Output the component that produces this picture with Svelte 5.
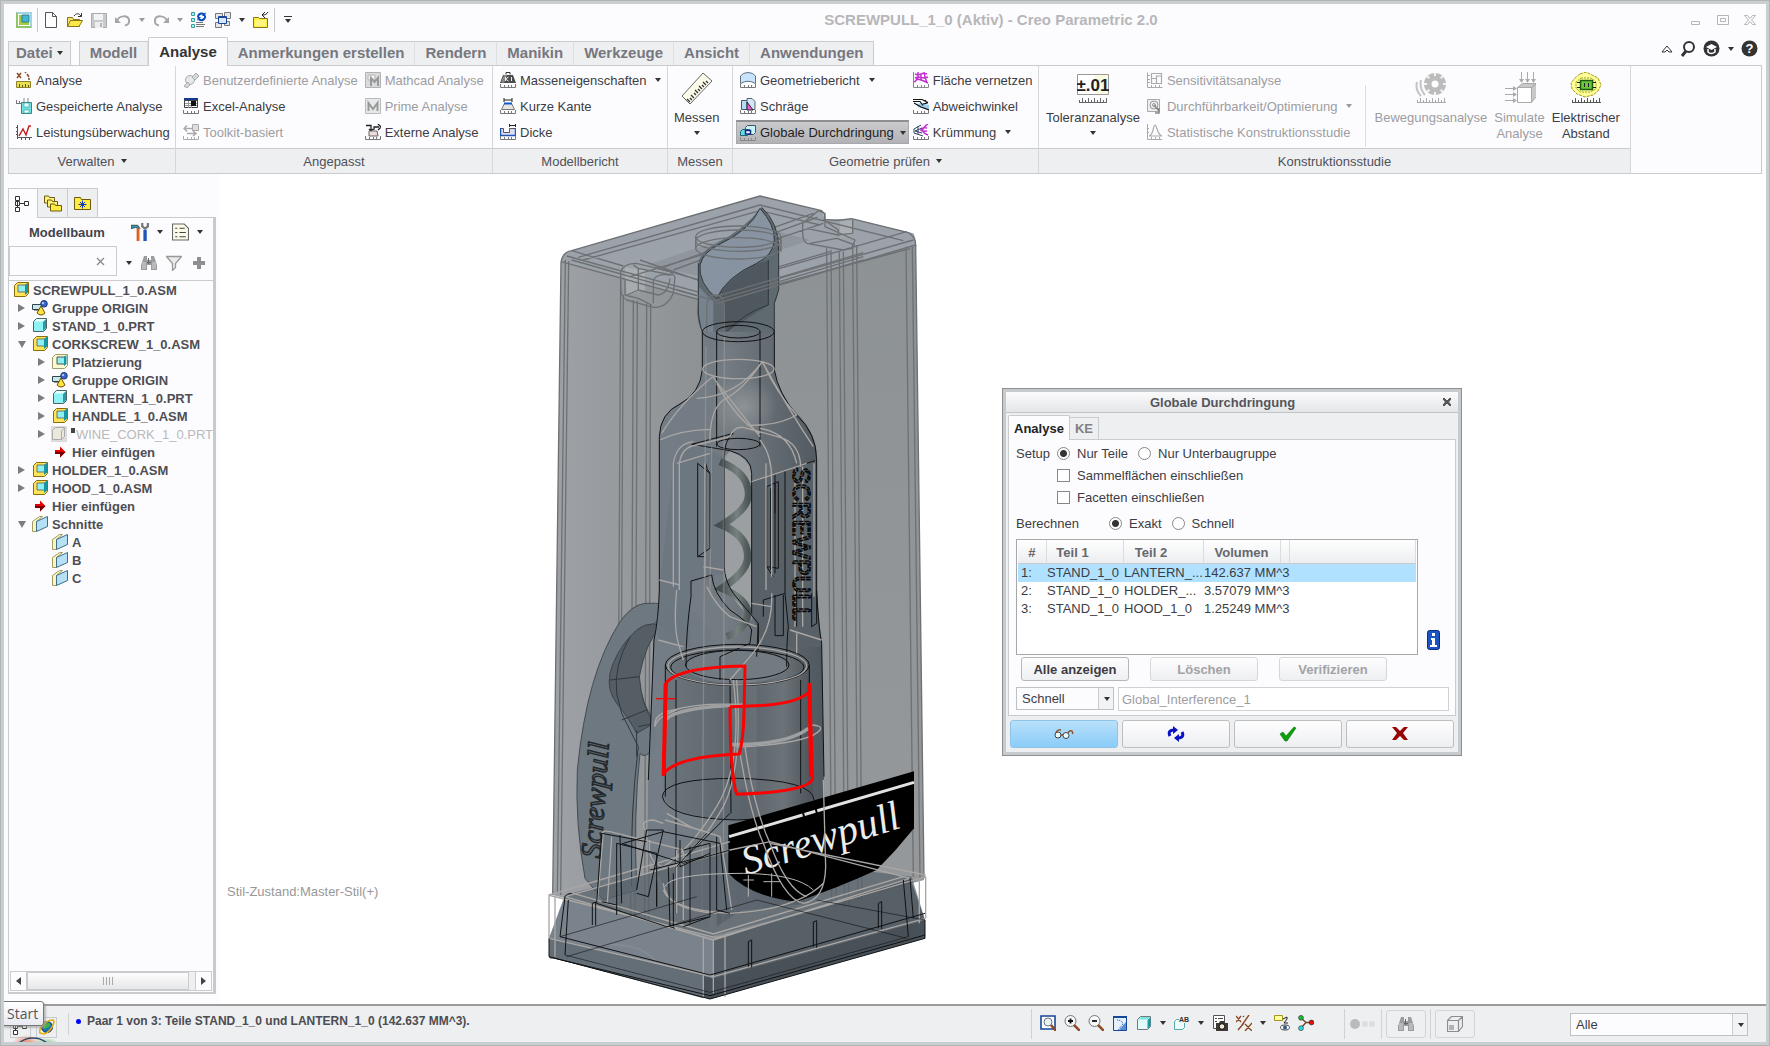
<script lang="ts">
    const icons: Record<string, string> = {
        app: `<path d="M0 0h16v16H0z" fill="#9fd3e6"/><path d="M0 16V0l16 16z" fill="#8fc46a"/><path d="M2 2h12v12H2z" fill="#fff"/><path d="M3 3h4v7h6v3H3z" fill="#a5cc3c"/><path d="M6 3h7v7H6z" fill="#43b5d6" stroke="#2a7f8c"/>`,
        file: `<path d="M2.5.5h7l4 4v11h-11z" fill="#fff" stroke="#555"/><path d="M9.5.5v4h4" fill="none" stroke="#555"/>`,
        open: `<path d="M.5 14.5v-9h5l1 2h6v7z" fill="#f5e070" stroke="#8a7420"/><path d="M.5 14.5l3-6h12l-3.500 6z" fill="#ffe84a" stroke="#8a7420"/><path d="M7 4c2-3 5-3 7 0M14.500 1v3.500H11" fill="none" stroke="#333"/>`,
        save: `<path d="M.5 1.500h15v14H.5z" fill="#c8cacc" stroke="#a8aaac"/><path d="M3 2h9v6H3z" fill="#f2f3f4"/><path d="M4 10h8v6H4z" fill="#efefef"/><path d="M9 11h2v4H9z" fill="#b5b5b5"/>`,
        undo: `<path d="M2 9C4 3 13 3 14 8c.5 3-1.500 5-4 5.500" fill="none" stroke="#a3a6a9" stroke-width="2"/><path d="M0 5v6h6z" fill="#a3a6a9"/>`,
        redo: `<path d="M14 9C12 3 3 3 2 8c-.5 3 1.500 5 4 5.500" fill="none" stroke="#a3a6a9" stroke-width="2"/><path d="M16 5v6h-6z" fill="#a3a6a9"/>`,
        regen: `<path d="M.5.5h3v3h-3zM.5 6.500h3v3h-3zM.5 12.500h3v3h-3z" fill="#a9f0f0" stroke="#3a9c9c"/><path d="M5 10.500h7M5 12.500h9M5 14.500h8" stroke="#777"/><path d="M7 5a3.500 3.500 0 0 1 6-2.500M14 4a3.500 3.500 0 0 1-6 3" fill="none" stroke="#0748c0" stroke-width="2"/><path d="M14.500 0v4H11zM6.500 9V5H10z" fill="#0748c0"/>`,
        windows: `<path d="M.5 1.500h7v5h-7zM9.500.5h6v6h-6zM.5 10.500h6v5h-6zM9.500 9.500h5v4h-5z" fill="#e4e6e8" stroke="#777"/><path d="M3.500 4.500h8v7h-8z" fill="#d7e6fb" stroke="#1a4799"/><path d="M3.500 5.500h8" stroke="#1a4799"/>`,
        closefolder: `<path d="M.5 15.500v-10h5l1 1h8v9z" fill="#ffef3c" stroke="#8a7420"/><path d="M2 8h11v6H2z" fill="#fff580"/><path d="M15 0c-1 2-3 3-5 3M12 0L9 3l3 3" fill="none" stroke="#222"/>`,
        analyse: `<path d="M1 1l4 5M5 1L1 6M9 0l1 1M11 2l2 3M13 6v2" stroke="#8a4a1e" stroke-width="1.500"/><path d="M.5 9.500h14v6H.5z" fill="#e8df50" stroke="#8d8325"/><path d="M3.500 12v3M6.500 13v2M9.500 12v3M12.500 13v2" stroke="#5e5716"/>`,
        saved: `<path d="M.5 2v4M.5 5.500h5M3.500 3v3" stroke="#777" fill="none"/><path d="M5.500 4.500h10v11h-10z" fill="#6de0e0" stroke="#318a8a"/><path d="M8 0v4M12 0v4" stroke="#888"/><path d="M8 5h5v4H8zM8 12h5v3H8z" fill="#dff" stroke="#318a8a" stroke-width=".5"/>`,
        chart: `<path d="M1.500 1v14M1 13.500h15M0 3.500h2M0 7.500h2M0 10.500h2M5.500 13v3M9.500 13v3M13.500 13v3" stroke="#555" fill="none"/><path d="M3 12l4-7 3 6 3-9 2 0" fill="none" stroke="#c51a1a" stroke-width="1.400"/>`,
        userdef: `<circle cx="7" cy="8" r="4.500" fill="#e6e7e8" stroke="#aaa"/><path d="M9 5l4-4 3 3-4 4zM1 14l4-4 2 3-3 3z" fill="#d6d7d8" stroke="#aaa"/>`,
        excel: `<path d="M1 0h14v3H1z" fill="#15398f"/><path d="M1.500 2.500h13v7h-13z" fill="#fff" stroke="#444"/><path d="M2 5.500h12M2 7.500h12M5.500 3v7M8.500 3v7" stroke="#999"/><path d="M8 3h5v5H8z" fill="#111"/><path d="M.5 12v3.500h15V12M4.500 13v2M8.500 13v2M11.500 13v2" fill="none" stroke="#777"/>`,
        toolkit: `<path d="M9.500.5h6v6h-6z" fill="#ddd" stroke="#aaa"/><path d="M1 4.500h9M4 1.500l-3 3 3 3M13 9.500H4M10 7l3 2.500-3 2.500" fill="none" stroke="#aaa" stroke-width="1.500"/><path d="M.5 12v3.500h15V12M4.500 13v2M8.500 13v2M11.500 13v2" fill="none" stroke="#aaa"/>`,
        mathcad: `<path d="M.5.5h15v15H.5z" fill="#d9dbdc" stroke="#b0b2b3"/><path d="M3 3h7v5H3z" fill="#f2f2f2" stroke="#b5b5b5"/><path d="M6 14V6l3.500 4L13 6v8" fill="none" stroke="#999" stroke-width="2"/>`,
        prime: `<path d="M.5.5h15v15H.5z" fill="#e6e8e9" stroke="#b8babb"/><path d="M3.500 13V5l4.500 6 4.500-6v8" fill="none" stroke="#999" stroke-width="2"/>`,
        external: `<path d="M1 1.500h5v5M6 7l-2-2M6 7l2-2M9 6V3h5M13 0l3 3-3 3" fill="none" stroke="#222" stroke-width="1.300"/><path d="M4 7h8l1 5H4z" fill="#efdcdc" stroke="#666"/><path d="M.5 12v3.500h15V12M4.500 13v2M8.500 13v2M11.500 13v2" fill="none" stroke="#777"/>`,
        mass: `<path d="M6 2.500V.5h4v2" fill="none" stroke="#333"/><path d="M3 3h10l3 8H0z" fill="#4c4c4c"/><path d="M1 10l3-7h3L4 11z" fill="#888"/><path d="M5.500 5v4M8.500 5l-3 2 3 2M11.500 5v4" stroke="#eee" fill="none"/><path d="M.5 12v3.500h15V12M4.500 13v2M8.500 13v2M11.500 13v2" fill="none" stroke="#777"/>`,
        edge: `<path d="M4 0v4M12 0v4M4 2h8" stroke="#222" fill="none"/><path d="M4.500 5.500h7l3 6h-13z" fill="#e5e5e5" stroke="#777"/><path d="M4 5.500h8" stroke="#0b58c9" stroke-width="2"/><path d="M.5 12v3.500h15V12M4.500 13v2M8.500 13v2M11.500 13v2" fill="none" stroke="#777"/>`,
        thick: `<path d="M.5 4.500h3v4h6v-4h6v7H.5z" fill="#dcdcf5" stroke="#555"/><path d="M.5 4v7.500h15V4" fill="none" stroke="#2257b5" stroke-width="1.500"/><path d="M9.500 0v3M15.500 0v3M9.500 1.500h6" stroke="#222"/><path d="M.5 12v3.500h15V12M4.500 13v2M8.500 13v2M11.500 13v2" fill="none" stroke="#777"/>`,
        georeport: `<path d="M.5 11.500V4Q3 .5 8 .5T15.500 4v7.500Q8 7 .5 11.500z" fill="#c9e4fb" stroke="#5b7285"/><path d="M.5 12v3.500h15V12M4.500 13v2M8.500 13v2M11.500 13v2" fill="none" stroke="#777"/>`,
        draft: `<path d="M1.500 2.500h6v9h-6z" fill="#b5dcf7" stroke="#456"/><path d="M7 .5h5l3 3v8H7z" fill="#d3e6f5" stroke="#567"/><path d="M7 12V4l6 8z" fill="#ee5fe0" stroke="#222"/><path d="M.5 12v3.500h15V12M4.500 13v2M8.500 13v2M11.500 13v2" fill="none" stroke="#777"/>`,
        interfere: `<path d="M5.500 2.500l2-2h8v7l-2 2h-8z" fill="#c6f5f8" stroke="#456"/><path d="M.5 6.500l2-2h7v4l-2 2H.5z" fill="#5be0e8" stroke="#267"/><path d="M5.500 5.500h5v3.500h-5z" fill="#fff" stroke="#11297e" stroke-width="1.500"/><path d="M.5 12v3.500h15V12M4.500 13v2M8.500 13v2M11.500 13v2" fill="none" stroke="#888"/>`,
        mesh: `<path d="M2 2l3 1 6-2 3 1M2 6l3-1 6 1 4-1M1 10l4-3 6 2 4 2M5 0v5l-3 5M11 0l1 5 2 6M8 2v7" fill="none" stroke="#c42bd4" stroke-width="1.400"/><path d="M.5 0v15.500h15V12M4.500 13v2M8.500 13v2M11.500 13v2" fill="none" stroke="#888"/>`,
        deviation: `<path d="M4 6l4-1 8 2v5L5 9z" fill="#9ccfee"/><path d="M0 1.500h9l6 3M0 3.500h7l3 4M1 5l7 4 8 3M12 2l2 3-4 1" fill="none" stroke="#111" stroke-width="1.200"/><path d="M.5 12v3.500h15V12M4.500 13v2M8.500 13v2M11.500 13v2" fill="none" stroke="#777"/>`,
        curvature: `<path d="M15 0C9 4 7 8 15 11M14 4C8 3 4 8 14 7" fill="none" stroke="#c42bd4" stroke-width="1.500"/><path d="M8 1L1 5v4l9 3M9 4L2 7l7 2M5 2v8" fill="none" stroke="#346" stroke-width="1"/><path d="M.5 12v3.500h15V12M4.500 13v2M8.500 13v2M11.500 13v2" fill="none" stroke="#777"/>`,
        sens: `<path d="M.5.500v15h15M1 3.500h2M1 7.500h2M1 10.500h2M4.500 13v2M8.500 13v2M12.500 13v2" fill="none" stroke="#aaa"/><path d="M4.500 1.500h10v10h-10zM4.500 6.500h5v5M9.500 6.500V4h5" fill="none" stroke="#aaa" stroke-width="1.200"/>`,
        optimize: `<path d="M.5 1.500h12v12H.5z" fill="#eee" stroke="#aaa"/><circle cx="7" cy="7" r="4" fill="none" stroke="#999"/><circle cx="7" cy="7" r="1.500" fill="none" stroke="#999"/><path d="M7 7l5 6M12 10v5h-4" fill="none" stroke="#888" stroke-width="1.600"/>`,
        stat: `<path d="M.5 0v15.500H15M4.500 13v2M8.500 13v2M12.500 13v2M0 4.500h2M0 8.500h2" fill="none" stroke="#aaa"/><path d="M2 12C7 11 6 1 8 1s2 10 7 11z" fill="none" stroke="#aaa" stroke-width="1.200"/>`,
        tree: `<path d="M.5.5h4v4h-4zM.5 5.500h4v4h-4zM.5 11.500h4v4h-4zM9.500 5.500h4v4h-4z" fill="#fff" stroke="#333"/><path d="M5 7.500h4M2.500 4v8" stroke="#333"/>`,
        folders: `<path d="M.5 7.500v-7h4l1 1.500h5v5.500z" fill="#fdf27a" stroke="#6d5a10"/><path d="M3.500 11.500v-7h4l1 1.500h5v5.500z" fill="#fdf27a" stroke="#6d5a10"/><path d="M6.500 15.500v-7h4l1 1.500h6v5.500z" fill="#ffec3c" stroke="#6d5a10"/>`,
        favorites: `<path d="M.5 14.500v-12h6l1 2h9v10z" fill="#ffee3c" stroke="#6d5a10"/><path d="M8.500 5.500v8M4.500 9.500h8M6 7l5 5M11 7l-5 5" stroke="#1738c8"/>`,
        tools: `<path d="M0 2h6l2 3H7L4 4 0 5z" fill="#2a9bb0" stroke="#444" stroke-width=".8"/><path d="M5 5h3v11H5z" fill="#e05a20"/><path d="M7 5h1v11H7z" fill="#f3c020"/><path d="M10 0v3l2.500 2L15 3V0" fill="none" stroke="#777" stroke-width="2"/><path d="M11 6h3v10h-3z" fill="#1f57b8"/>`,
        list: `<path d="M.5.5h11l4 4v11H.5z" fill="#fbfbe8" stroke="#666"/><path d="M3 4.500h2M3 8.500h2M3 12.500h2M7 4.500h5M7 8.500h6M7 12.500h6" stroke="#444"/>`,
        binoc: `<path d="M3 1h3v4h4V1h3l3 9v5h-6v-5H6v5H0v-5z" fill="#9a9c9e"/><path d="M2 7v7M4 7v7M12 7v7M14 7v7" stroke="#d5d6d7"/><path d="M7.500 3v6M6 7.500h4" stroke="#666"/>`,
        funnel: `<path d="M.5 1.500h15l-6 7v4l-3 3v-7z" fill="#ebebeb" stroke="#999" stroke-width="1.300"/>`,
        plus: `<path d="M6 2h4v4h4v4h-4v4H6v-4H2V6h4z" fill="#8d8f91"/>`,
        asm: `<path d="M1.500 3.500l3-3h11v11l-3 3h-11z" fill="#ffe45a" stroke="#8d6c10"/><path d="M5 3h9v7H5z" fill="#8ff0f4" stroke="#555" stroke-width=".8"/><path d="M12 3l3-2.500v10L12 13z" fill="#1795a5"/>`,
        part: `<path d="M1.500 3.500l3-3h10v10l-3 3h-10z" fill="#8df3f6" stroke="#4c6468"/><path d="M11 4l3-3v9l-3 3z" fill="#2b9aa2"/><path d="M2 3.500l3-2.500h9l-3 2.500z" fill="#e9ffff"/>`,
        partoff: `<path d="M0 0h16v16H0z" fill="#dcdcdc"/><path d="M1.500 4.500l3-3h9v9l-3 3h-9z" fill="#ebe9dc" stroke="#aaa"/><path d="M10.500 14V5l3-3" fill="none" stroke="#aaa"/>`,
        place: `<path d="M.5 3.500l3-3h12v11l-3 3H.5z" fill="#fcf8cf" stroke="#a09a70"/><path d="M5 3h8v7H5z" fill="#8ff0f4" stroke="#555"/><path d="M12 3l2.500-2v9L12 12z" fill="#1795a5"/>`,
        group: `<path d="M.5 4.500h9v5h-9z" fill="#c8e8e8" stroke="#345"/><path d="M2 10h5" stroke="#333"/><circle cx="12" cy="3.800" r="3.300" fill="#3a67c8" stroke="#1b3570"/><path d="M9 6l4 7q-4 4-8 0z" fill="#ffe23c" stroke="#6b5210"/><circle cx="11" cy="3" r="1" fill="#cfe0ff"/>`,
        arrow: `<path d="M3 6h5V2.500l5.500 5.500L8 13.500V10H3z" fill="#e80000"/><path d="M3 8h10.500L8 13.500V10H3z" fill="#7a0000"/>`,
        plane: `<path d="M.5 5.500l7-5h3l-6 5v10h-4z" fill="#fbf5c0" stroke="#a29b62"/><path d="M4.500 5.500l11-5v10l-11 5z" fill="#b5e0f5" stroke="#3d6d88"/>`,
        zoomfit: `<path d="M1 1h14v13H1z" fill="#fff" stroke="#15479a" stroke-width="1.600"/><circle cx="8" cy="7" r="4" fill="#e8f2f8" stroke="#777"/><path d="M11 10l5 6" stroke="#8a4a24" stroke-width="2.500"/>`,
        zoomin: `<circle cx="6.500" cy="6" r="5.500" fill="#f5f7f8" stroke="#777"/><path d="M4 6h5M6.500 3.500v5" stroke="#111" stroke-width="1.800"/><path d="M10 10l6 6" stroke="#8a4a24" stroke-width="2.500"/>`,
        zoomout: `<circle cx="6.500" cy="6" r="5.500" fill="#f5f7f8" stroke="#777"/><path d="M4 6h5" stroke="#111" stroke-width="1.800"/><path d="M10 10l6 6" stroke="#8a4a24" stroke-width="2.500"/>`,
        repaint: `<path d="M1.500 1.500h13v14h-13z" fill="#e4f0fc" stroke="#15479a"/><path d="M1 1h14v2H1z" fill="#15479a"/><path d="M14 7L7 15h7z" fill="#5a8ed0"/><path d="M5 5q5 0 6 4l-5 6" fill="none" stroke="#15479a" stroke-dasharray="1 1"/>`,
        shade: `<path d="M1.500 4.500l3-3h10v10l-3 3h-10z" fill="#e4fbfb" stroke="#777"/><path d="M11.500 5l3-3v9l-3 3z" fill="#1f9aa3"/><path d="M2 4.500L5 2h9l-3 2.500z" fill="#79e4e6"/>`,
        camera: `<path d="M1.500.5h11v13h-11z" fill="#fff" stroke="#555"/><path d="M3 3.500h2M6 3.500h5M3 6.500h2" stroke="#444"/><path d="M4 8h3l1-2h4l1 2h3v8H4z" fill="#3c3a35"/><circle cx="10" cy="11.500" r="2.800" fill="#f2ecd2" stroke="#111"/>`,
        axes: `<path d="M0 1l5 6M5 1L0 7M7 1l1 1M6 10L13 0M2 15l6-7M9 9l7 7M16 8l-7 8" fill="none" stroke="#8a4a24" stroke-width="1.400"/>`,
        annot: `<path d="M.5.500h8v5h-8z" fill="#ffff9c" stroke="#a0981c"/><path d="M9 4l4-2v2l-3 4h4" fill="none" stroke="#222"/><ellipse cx="11" cy="12.500" rx="4.500" ry="2.500" fill="#fff" stroke="#444"/><circle cx="11" cy="12.500" r="2" fill="#2c5c8c"/>`,
        csys: `<path d="M3 3l5 4.500L3 13M8 7.500h6" fill="none" stroke="#7b3b18" stroke-width="1.300"/><circle cx="3" cy="2.800" r="2.400" fill="#18c032" stroke="#222" stroke-width=".6"/><circle cx="13.500" cy="7.500" r="2.400" fill="#e01010" stroke="#222" stroke-width=".6"/><circle cx="3" cy="13.200" r="2.400" fill="#28dce8" stroke="#222" stroke-width=".6"/>`,
        box: `<path d="M.5 4.500h11v11H.5zM.5 4.500l4-4h11v10l-4 5M11.500 4.500l4-4" fill="none" stroke="#8b8d8f" stroke-width="1.200"/><path d="M2 9h5v5H2z" fill="#b0b2b4"/>`,
        globe: `<circle cx="8" cy="8" r="5.500" fill="#1f6fc0" stroke="#123"/><path d="M4 7q3-4 7-3q1 4-3 5t-3 3z" fill="#39b34a"/><path d="M1 14C-1 9 7 1 14 1c3 1-2 12-9 14z" fill="none" stroke="#e6b010" stroke-width="1.600"/>`,
        info: `<rect x=".5" y=".5" width="12" height="19" rx="2" fill="#1c54c4" stroke="#0d2e80"/><path d="M5 3h3v3H5zM4 8h4v7h2v2H3v-2h2v-5H4z" fill="#fff"/>`,
        glasses: `<circle cx="4" cy="9" r="3" fill="#e8fbff" stroke="#444"/><circle cx="12" cy="9.500" r="3" fill="#e8fbff" stroke="#444"/><path d="M7 9h2M2 7Q3 3 7 4M14 7q1-3 4-2l1 3" fill="none" stroke="#8a4a24" stroke-width="1.300"/>`,
        repeat: `<path d="M3 10C1 6 3 4 7 4M15 6c2 4 0 6-4 6" fill="none" stroke="#0a12c8" stroke-width="3"/><path d="M6 0l5 4-5 4zM12 8v8l-5-4z" fill="#0a12c8"/>`,
        ok: `<path d="M1 8l3-2 3 4 8-9 2 1-9 13H6z" fill="#0aa00a" stroke="#05700a" stroke-width=".6"/>`,
        cancel: `<path d="M1 1h4l4 4 4-4h4l-5 6 5 7h-4L9 10l-4 4H1l5-7z" fill="#960505"/>`,
    };

    const bigIcons: Record<string, string> = {
        ruler: `<path d="M1 24L22 1l9 8L9 32z" fill="#fdfbea" stroke="#666"/><path d="M7 28l-3-3M9 26l-2-2M11 24l-3-3M13 21l-2-2M15 19l-3-3M17 17l-2-2M19 15l-3-3M21 13l-2-2M23 11l-3-3M25 9l-2-2" transform="translate(2 2)" stroke="#333" stroke-width="1.300"/>`,
        tol: `<path d="M.5 2.500h31v20H.5z" fill="#fff" stroke="#999"/><path d="M18 3h13v19H18z" fill="#fbfbe0"/><text x="16" y="19" text-anchor="middle" font-size="17" font-weight="bold" fill="#222">±.01</text><path d="M2 30.500h28M2.500 28v2M5.500 26v4M8.500 28v2M11.500 26v4M14.500 28v2M17.500 26v4M20.500 28v2M23.500 26v4M26.500 28v2M29.500 26v4" stroke="#666"/>`,
        motion: `<circle cx="20" cy="12" r="11" fill="#bcbcbc"/><path d="M20 1v22M9 12h22M12 4l16 16M28 4L12 20" stroke="#f4f4f4" stroke-width="2"/><circle cx="20" cy="12" r="8" fill="#bcbcbc"/><circle cx="20" cy="12" r="3.500" fill="#fff"/><path d="M6 8q-2 8 4 15M2 10q-2 8 4 14" fill="none" stroke="#c4c4c4" stroke-width="2"/><path d="M2 30.500h29M2.500 28v2M5.500 26v4M8.500 28v2M11.500 26v4M14.500 28v2M17.500 26v4M20.500 28v2M23.500 26v4M26.500 28v2M29.500 26v4" stroke="#aaa"/>`,
        simulate: `<path d="M13.500 15.500h14v15h-14z" fill="#fff" stroke="#aaa"/><path d="M13.500 15.500l5-4h14l-5 4zM27.500 15.500l5-4v13l-5 6z" fill="#c8c8c8" stroke="#aaa"/><path d="M17.500 0v8M23.500 0v8M29.500 0v8M1 16.500h10M1 22.500h10M1 28.500h10" stroke="#aaa"/><path d="M15 7h5l-2.500 4zM21 7h5l-2.500 4zM27 7h5l-2.500 4zM9 14v5l4-2.500zM9 20v5l4-2.500zM9 26v5l4-2.500z" fill="#aaa"/>`,
        electric: `<path d="M10 2l6-2 6 3 6 3 3 7-3 6-5 4-8 2-8-3-5-5-1-6 4-5z" fill="#ffff9a" stroke="#a09a10" stroke-dasharray="3 1"/><path d="M11 6h10l5 4v7l-6 3H10l-4-4v-6z" fill="none" stroke="#a09a10" stroke-dasharray="2 1"/><path d="M10.500 8.500h12v9h-12z" fill="#6cc63c" stroke="#1d5c10" stroke-width="1.500"/><path d="M14.500 11v4M18.500 11v4M7 10.500h3M7 15.500h3M23 10.500h3M23 15.500h3" stroke="#222"/><path d="M2 30.500h29M2.500 28v2M5.500 26v4M8.500 28v2M11.500 26v4M14.500 28v2M17.500 26v4M20.500 28v2M23.500 26v4M26.500 28v2M29.500 26v4" stroke="#555"/>`,
    };

    const tabs = ["Modell", "Analyse", "Anmerkungen erstellen", "Rendern", "Manikin", "Werkzeuge", "Ansicht", "Anwendungen"];

    type Item = { icon: string; label: string; off?: boolean; menu?: boolean; on?: boolean };
    type Big = { icon: string; lines: string[]; off?: boolean; menu?: boolean };
    type Group = { id: string; label: string; menu?: boolean; cols?: Item[][]; lead?: Big[]; trail?: Big[] };

    const groups: Group[] = [
        { id: "manage", label: "Verwalten", menu: true, cols: [[
            { icon: "analyse", label: "Analyse" },
            { icon: "saved", label: "Gespeicherte Analyse" },
            { icon: "chart", label: "Leistungsüberwachung" },
        ]] },
        { id: "custom", label: "Angepasst", cols: [[
            { icon: "userdef", label: "Benutzerdefinierte Analyse", off: true },
            { icon: "excel", label: "Excel-Analyse" },
            { icon: "toolkit", label: "Toolkit-basiert", off: true },
        ], [
            { icon: "mathcad", label: "Mathcad Analyse", off: true },
            { icon: "prime", label: "Prime Analyse", off: true },
            { icon: "external", label: "Externe Analyse" },
        ]] },
        { id: "report", label: "Modellbericht", cols: [[
            { icon: "mass", label: "Masseneigenschaften", menu: true },
            { icon: "edge", label: "Kurze Kante" },
            { icon: "thick", label: "Dicke" },
        ]] },
        { id: "measure", label: "Messen", lead: [{ icon: "ruler", lines: ["Messen"], menu: true }] },
        { id: "geometry", label: "Geometrie prüfen", menu: true, cols: [[
            { icon: "georeport", label: "Geometriebericht", menu: true },
            { icon: "draft", label: "Schräge" },
            { icon: "interfere", label: "Globale Durchdringung", menu: true, on: true },
        ], [
            { icon: "mesh", label: "Fläche vernetzen" },
            { icon: "deviation", label: "Abweichwinkel" },
            { icon: "curvature", label: "Krümmung", menu: true },
        ]] },
        { id: "study", label: "Konstruktionsstudie",
            lead: [{ icon: "tol", lines: ["Toleranzanalyse"], menu: true }],
            cols: [[
                { icon: "sens", label: "Sensitivitätsanalyse", off: true },
                { icon: "optimize", label: "Durchführbarkeit/Optimierung", off: true, menu: true },
                { icon: "stat", label: "Statistische Konstruktionsstudie", off: true },
            ]],
            trail: [
                { icon: "motion", lines: ["Bewegungsanalyse"], off: true },
                { icon: "simulate", lines: ["Simulate", "Analyse"], off: true },
                { icon: "electric", lines: ["Elektrischer", "Abstand"] },
            ] },
    ];

    const tree = [
        { d: 0, icon: "asm", label: "SCREWPULL_1_0.ASM" },
        { d: 1, icon: "group", label: "Gruppe ORIGIN", x: "closed" },
        { d: 1, icon: "part", label: "STAND_1_0.PRT", x: "closed" },
        { d: 1, icon: "asm", label: "CORKSCREW_1_0.ASM", x: "opened" },
        { d: 2, icon: "place", label: "Platzierung", x: "closed" },
        { d: 2, icon: "group", label: "Gruppe ORIGIN", x: "closed" },
        { d: 2, icon: "part", label: "LANTERN_1_0.PRT", x: "closed" },
        { d: 2, icon: "asm", label: "HANDLE_1_0.ASM", x: "closed" },
        { d: 2, icon: "partoff", label: "WINE_CORK_1_0.PRT", x: "closed", off: true },
        { d: 2, icon: "arrow", label: "Hier einfügen" },
        { d: 1, icon: "asm", label: "HOLDER_1_0.ASM", x: "closed" },
        { d: 1, icon: "asm", label: "HOOD_1_0.ASM", x: "closed" },
        { d: 1, icon: "arrow", label: "Hier einfügen" },
        { d: 1, icon: "plane", label: "Schnitte", x: "opened" },
        { d: 2, icon: "plane", label: "A" },
        { d: 2, icon: "plane", label: "B" },
        { d: 2, icon: "plane", label: "C" },
    ];

    const results = [
        ["1:", "STAND_1_0", "LANTERN_...", "142.637 MM^3"],
        ["2:", "STAND_1_0", "HOLDER_...", "3.57079 MM^3"],
        ["3:", "STAND_1_0", "HOOD_1_0", "1.25249 MM^3"],
    ];

    let scope = "parts";
    let accuracy = "exact";
    let selected = 0;
    let search = "";
    let featureName = "Global_Interference_1";
</script>

{#snippet icon(name: string)}
    <svg class="icon" viewBox="0 0 16 16" aria-hidden="true">{@html icons[name]}</svg>
{/snippet}

{#snippet big(item: Big)}
    <button class="big {item.icon}" disabled={item.off}>
        <svg viewBox="0 0 32 32" aria-hidden="true">{@html bigIcons[item.icon]}</svg>
        {#each item.lines as line}<span>{line}</span>{/each}
        {#if item.menu}<i class="caret"></i>{/if}
    </button>
{/snippet}

<div class="window">
    <header class="titlebar">
        <div class="quick">
            <button aria-label="Creo">{@render icon("app")}</button>
            <i class="sep"></i>
            <button aria-label="Neu">{@render icon("file")}</button>
            <button aria-label="Öffnen">{@render icon("open")}</button>
            <button aria-label="Speichern">{@render icon("save")}</button>
            <button class="split" aria-label="Rückgängig">{@render icon("undo")}<i class="caret dim"></i></button>
            <button class="split" aria-label="Wiederherstellen">{@render icon("redo")}<i class="caret dim"></i></button>
            <button aria-label="Regenerieren">{@render icon("regen")}</button>
            <button class="split" aria-label="Fenster">{@render icon("windows")}<i class="caret"></i></button>
            <button aria-label="Schließen">{@render icon("closefolder")}</button>
            <i class="sep"></i>
            <button class="customize" aria-label="Anpassen"><i class="bar"></i><i class="caret"></i></button>
        </div>
        <h1>SCREWPULL_1_0 (Aktiv) - Creo Parametric 2.0</h1>
        <div class="controls">
            <button aria-label="Minimieren"><svg viewBox="0 0 12 12"><path d="M1.500 7.500h8v3h-8z" /></svg></button>
            <button aria-label="Maximieren"><svg viewBox="0 0 12 12"><path d="M.5 1.500h11v9H.5zM3.500 4.500h5v3h-5z" /></svg></button>
            <button aria-label="Fenster schließen"><svg viewBox="0 0 12 12"><path d="M.5 1.500h3L6 4.500l2.500-3h3L7.500 6l4 4.500h-3L6 7.500l-2.500 3h-3l4-4.500z" /></svg></button>
        </div>
    </header>

    <nav class="tabs">
        <button class="tab file">Datei<i class="caret"></i></button>
        {#each tabs as tab}
            <button class="tab" class:active={tab === "Analyse"}>{tab}</button>
        {/each}
        <div class="help">
            <button aria-label="Menüband minimieren"><svg width="12" height="10" viewBox="0 0 12 10"><path d="M1 8l5-6 5 6H8L6 6 4 8z" fill="#fff" stroke="#333" /></svg></button>
            <button aria-label="Suchen"><svg width="16" height="16" viewBox="0 0 16 16"><circle cx="9" cy="6" r="5" fill="none" stroke="#333" stroke-width="2" /><path d="M6 10l-4 5" stroke="#333" stroke-width="3" /></svg></button>
            <button class="split" aria-label="Lernen"><svg width="17" height="17" viewBox="0 0 17 17"><circle cx="8.500" cy="8.500" r="8" fill="#333" /><path d="M3 7l5.500-3L14 7l-5.500 3z" fill="#fff" /><path d="M5 9v3q3 3 7 0V9" fill="none" stroke="#fff" stroke-width="1.500" /></svg><i class="caret"></i></button>
            <button aria-label="Hilfe"><svg width="17" height="17" viewBox="0 0 17 17"><circle cx="8.500" cy="8.500" r="8" fill="#333" /><text x="8.500" y="13" text-anchor="middle" font-size="13" font-weight="bold" fill="#fff">?</text></svg></button>
        </div>
    </nav>

    <section class="ribbon">
        {#each groups as g}
            <div class="group {g.id}">
                <div class="tools">
                    {#each g.lead ?? [] as b}{@render big(b)}{/each}
                    {#each g.cols ?? [] as col}
                        <div class="col">
                            {#each col as item}
                                <button class="cmd" class:on={item.on} disabled={item.off}>
                                    {@render icon(item.icon)}<span>{item.label}</span>
                                    {#if item.menu}<i class="caret"></i>{/if}
                                </button>
                            {/each}
                        </div>
                    {/each}
                    {#if g.trail}
                        <i class="divider"></i>
                        {#each g.trail as b}{@render big(b)}{/each}
                    {/if}
                </div>
                <div class="caption">{g.label}{#if g.menu}<i class="caret"></i>{/if}</div>
            </div>
        {/each}
    </section>

    <main>
        <aside>
            <div class="side-tabs">
                <button class="active" aria-label="Modellbaum">{@render icon("tree")}</button>
                <button aria-label="Ordner-Browser"><svg width="18" height="17" viewBox="0 0 18 16">{@html icons.folders}</svg></button>
                <button aria-label="Favoriten"><svg width="17" height="16" viewBox="0 0 17 16">{@html icons.favorites}</svg></button>
            </div>
            <div class="panel">
                <div class="panel-head">
                    <h2>Modellbaum</h2>
                    <button aria-label="Einstellungen"><svg width="18" height="18" viewBox="0 0 16 16">{@html icons.tools}</svg><i class="caret"></i></button>
                    <button aria-label="Anzeigen"><svg width="17" height="18" viewBox="0 0 16 16">{@html icons.list}</svg><i class="caret"></i></button>
                </div>
                <div class="search">
                    <label>
                        <input type="text" aria-label="Suche im Modellbaum" bind:value={search} />
                        <button aria-label="Löschen der Suche"><svg width="9" height="9" viewBox="0 0 9 9"><path d="M1 1l7 7M8 1L1 8" stroke="#888" stroke-width="1.300" /></svg></button>
                    </label>
                    <i class="caret"></i>
                    <button aria-label="Suchen">{@render icon("binoc")}</button>
                    <button aria-label="Filter">{@render icon("funnel")}</button>
                    <button aria-label="Hinzufügen">{@render icon("plus")}</button>
                </div>
                <ul>
                    {#each tree as node}
                        <li class="d{node.d}" class:off={node.off}>
                            {#if node.d > 0}
                                <span class="twist">{#if node.x}<button class={node.x} aria-label="Knoten umschalten"></button>{/if}</span>
                            {/if}
                            {@render icon(node.icon)}
                            {#if node.off}<i class="mark"></i>{/if}
                            <span>{node.label}</span>
                        </li>
                    {/each}
                </ul>
                <div class="scroll">
                    <button aria-label="Nach links"><i class="left"></i></button>
                    <div class="track"><div class="thumb"><i></i><i></i><i></i><i></i></div></div>
                    <button aria-label="Nach rechts"><i class="right"></i></button>
                </div>
            </div>
        </aside>

        <div class="canvas">
            <p class="style-state">Stil-Zustand:Master-Stil(+)</p>
            <svg class="model" viewBox="0 0 1260 2490" role="img" aria-label="Korkenzieher in Ständer">
                <defs>
                    <linearGradient id="left" x1="0" x2="1"><stop offset="0" stop-color="#9ea2a7" /><stop offset="1" stop-color="#8c9092" /></linearGradient>
                    <linearGradient id="right" x1="0" y1="0" x2="0" y2="1"><stop offset="0" stop-color="#8d9294" /><stop offset="1" stop-color="#96999b" /></linearGradient>
                    <linearGradient id="neck" x1="0" x2="1"><stop offset="0" stop-color="#727c86" /><stop offset=".45" stop-color="#727a81" /><stop offset="1" stop-color="#4c545b" /></linearGradient>
                    <linearGradient id="glass" x1="0" x2="1"><stop offset="0" stop-color="#6d757c" /><stop offset=".55" stop-color="#5c646b" /><stop offset=".8" stop-color="#6b7278" /><stop offset="1" stop-color="#4b5258" /></linearGradient>
                    <linearGradient id="coil" x1="0" x2="1"><stop offset="0" stop-color="#444d50" /><stop offset=".6" stop-color="#76827f" /><stop offset="1" stop-color="#4c5557" /></linearGradient>
                    <radialGradient id="shine"><stop offset="0" stop-color="#8d9397" /><stop offset="1" stop-color="#8d9397" stop-opacity="0" /></radialGradient>
                </defs>

                <!-- hood -->
                <path d="M93 245L555 372L540 2270L68 2145z" fill="url(#left)" />
                <path d="M555 372L1157 195L1182 2100L540 2270z" fill="url(#right)" />
                <path d="M93 245Q98 216 125 212L690 48L875 92L885 118L965 116L1150 160Q1158 172 1157 198L555 372z" fill="#9ba2aa" />
                <path d="M350 255L690 140L840 180L520 290z" fill="#8f969e" />
                <path d="M285 262L345 272V330L290 345zM930 125L968 120V165L930 170z" fill="#b6b8ba" opacity=".6" />
                <g class="hood">
                    <path d="M93 245Q98 216 125 212L690 48L875 92Q885 100 885 118L920 122L965 116L1135 158Q1158 170 1157 198M93 245L555 372L1157 195M110 228L555 350L1150 180M125 240L555 362L1140 206M125 212L280 258M145 232L690 75L1120 182M160 240L690 92L870 135" />
                    <path d="M93 245L68 2145M106 240L82 2140M116 244L92 2145M1157 195L1182 2095M1147 200L1170 2095M1128 200L1150 2090" />
                    <path d="M272 300L262 2200M280 345L270 2200M310 360L302 2210M322 362L314 2210M350 370L344 2220M362 372L356 2220" />
                    <path d="M890 205L905 2180M903 210L918 2180M928 215L944 2180M940 215L956 2180M968 200L984 2160M980 195L996 2160" />
                    <path d="M272 275Q280 250 320 250L420 275L435 290L430 340Q410 385 370 382L290 360Q272 350 272 320zM285 300L285 345L325 355L365 375M310 255L325 265L425 285M325 265V330L290 345M370 370V300Q380 280 420 285M325 330L385 345Q415 340 420 295" />
                    <path d="M818 130L865 92L885 100V140L975 180L965 205L940 210L830 190Q818 180 818 160zM830 145L925 165V150L880 118M925 165L968 160V120M840 190L920 175L975 195M850 100L400 262M862 112L430 270M880 130L700 190" />
                    <path d="M300 290L580 205M330 240L560 320L1130 155M375 262L560 315L900 215" />
                </g>

                <!-- cap -->
                <path d="M505 250Q510 215 560 190Q640 150 695 82Q748 140 746 200L746 330Q740 360 733 370V455L590 500Q560 510 540 490L517 455Q495 420 505 360z" fill="#5f6970" />
                <path d="M510 255Q520 215 570 192Q660 150 690 85Q735 135 733 180Q730 225 680 250Q590 290 560 355Q505 310 510 255z" fill="#8793a0" />
                <path d="M560 355Q600 290 680 252L715 240V375L590 455L583 470V370z" fill="#4f585e" />
                <path d="M506 320L550 365V495L517 455Q500 420 506 320z" fill="#76828e" />
                <path class="soft" d="M510 255Q520 215 570 192Q660 150 690 85Q735 135 733 180Q730 225 680 250Q590 290 560 355Q505 310 510 255zM505 250V400Q510 440 517 455M746 200V330L733 370V455M715 240V375Q640 400 590 455M695 82Q748 130 746 210" />
                <g class="hood"><ellipse cx="625" cy="170" rx="128" ry="32" /><ellipse cx="625" cy="182" rx="128" ry="32" /><ellipse cx="625" cy="205" rx="128" ry="32" /><path d="M497 170V205M753 170V215M555 350L1000 218M555 362L1000 230M555 372L1000 240M440 330L555 362" /><path d="M530 385Q530 345 555 345Q583 345 583 385V470M530 385V470L545 500Q560 510 575 500L578 470" /></g>

                <!-- wing handle behind the glass -->
                <path d="M345 1270Q410 1265 455 1300Q500 1340 505 1410L470 1420Q440 1350 380 1325Q330 1360 325 1480Q330 1570 375 1625V1700Q345 1740 330 1720Q310 1900 320 2130L220 2160L165 2095Q135 1930 142 1770Q170 1480 270 1325Q305 1275 345 1270z" fill="#6e7881" stroke="#444b50" stroke-width="3" />
                <path d="M300 1370Q340 1320 395 1335Q345 1390 328 1490Q335 1580 372 1630L320 1660Q300 1620 260 1570Q230 1530 240 1480Q255 1420 300 1370z" fill="#555e65" stroke="#3d4347" stroke-width="3" />
                <path class="soft" d="M300 1370Q250 1460 260 1540L275 1600L325 1700Q300 1900 305 2120M395 1335Q430 1350 455 1400M240 1500L328 1490M275 1620L350 1590M455 1390L545 1350M325 1640L375 1630M320 1650V1730" />
                <path d="M440 1270Q530 1300 560 1400L640 1800L650 2180L560 2240V1700Q520 1500 470 1400z" fill="#5d666e" />
                <text class="engraved" transform="translate(212 2036) rotate(-86)">Screwpull</text>

                <!-- bottle -->
                <path fill-rule="evenodd" d="M517 455H733V570Q745 640 800 700Q860 760 860 830V1230Q862 1320 875 1380L882 1810L887 2080Q870 2170 800 2175L600 2195Q420 2190 405 2120L355 2030Q350 1900 357 1780L370 1380Q388 1300 388 1230V770Q390 700 450 670Q517 635 517 560zM583 830V1180Q590 1240 640 1290L665 1320V870Q650 830 600 812z" fill="url(#neck)" opacity=".95" />
                <ellipse cx="640" cy="680" rx="100" ry="90" fill="url(#shine)" />
                <path d="M665 905L765 870L860 840V1230L875 1400H700L665 1300z" fill="#596168" />
                <path d="M430 850Q430 800 480 795L583 830V1180L480 1210V1400L385 1380L388 1230z" fill="#6c757e" opacity=".8" />
                <path d="M583 840V1180Q590 1240 640 1290L665 1315V880Q650 830 600 815z" fill="#9b9fa1" />
                <path d="M570 845Q660 880 655 950Q650 990 575 1035Q660 1070 652 1140Q645 1180 575 1225Q650 1255 655 1300Q645 1350 590 1370" fill="none" stroke="url(#coil)" stroke-width="22" />
                <path d="M405 1450Q420 1400 620 1400Q838 1400 838 1460L850 1850Q800 1920 620 1920Q420 1910 400 1850z" fill="url(#glass)" />
                <ellipse cx="620" cy="1460" rx="150" ry="50" fill="#737b82" />
                <path d="M600 1500H680V1830H620z" fill="#858b8f" opacity=".25" />

                <g class="ink">
                    <ellipse cx="625" cy="455" rx="108" ry="30" /><ellipse cx="625" cy="455" rx="65" ry="19" /><ellipse cx="625" cy="792" rx="64" ry="17" />
                    <path d="M517 455V570Q510 640 450 672Q390 700 388 770V1230Q385 1320 372 1380L355 1800M733 455V570Q745 640 800 705Q860 760 860 840V1230Q865 1340 875 1390L882 1790M560 455V800M690 455V800" />
                    <path d="M485 793L600 812Q665 830 665 880V1300M485 793L610 760Q583 780 583 830V1160Q583 1200 610 1240L685 1330V1410M665 905L855 842M765 870V1240M765 1240L700 1260V1310M735 880V1000" />
                    <path d="M503 850V1130L540 1105V880zM527 860V1110M527 850Q530 870 540 880M503 1130L525 1130M710 920L745 905V1165L710 1160zM722 925V1170M735 910V1180M710 1160L730 1190" />
                    <path d="M545 1185L483 1203V1250Q468 1350 468 1460M545 1185Q550 1240 600 1290Q660 1330 665 1350L660 1390L570 1430V1500M685 1330L680 1430" />
                    <path d="M735 1245V1367H760V1245M765 1240L775 1340Q770 1380 770 1460M800 1230V1340M845 1240V1340L860 1330V1230" />
                    <ellipse cx="622" cy="1455" rx="216" ry="62" /><ellipse cx="622" cy="1455" rx="155" ry="44" /><ellipse cx="622" cy="1462" rx="200" ry="52" />
                    <path d="M406 1455V1850M838 1455V1560M438 1500V2200M812 1500V1840M600 1500L603 1900M397 1850Q400 1795 620 1795Q850 1800 852 1860M397 1850Q410 1915 620 1920L720 1915" />
                </g>
                <g class="pale">
                    <path d="M528 500L515 2270M583 470L580 2270M545 800L540 1240" opacity=".45" />
                    <ellipse cx="625" cy="567" rx="107" ry="29" />
                    <path d="M548 590Q450 670 395 760M548 590Q600 660 690 770M560 610Q620 720 690 760M697 545Q620 650 500 655M697 545Q640 630 580 660Q540 690 540 780M697 545Q740 640 800 705Q740 740 650 735M697 545Q770 680 850 800M390 780Q450 750 540 748" />
                    <path d="M430 1220V850Q440 790 490 785M448 1230V850Q455 800 500 795L600 770M440 850L540 820M690 780Q725 820 725 900V1190M600 770Q610 740 640 742L750 772Q810 790 812 860M690 745Q780 760 800 850M665 905L830 850M708 850V1230M525 850V1190" />
                    <path d="M388 1200L450 1215M385 1380L460 1400M520 1160L580 1170M440 1230Q430 1340 445 1390L460 1440M530 1220Q560 1280 600 1310L680 1340M665 1270L725 1280M725 1240Q730 1350 660 1430L600 1500M780 1350L875 1380M800 1360V1420" />
                    <path d="M795 865V1340M818 860V1340M852 850V1250" />
                    <ellipse cx="622" cy="1458" rx="208" ry="57" />
                    <path d="M375 1640Q370 1600 430 1590Q520 1565 640 1575M375 1640Q380 1610 440 1590M835 1635Q880 1635 870 1650Q840 1690 620 1702" />
                </g>
                <text class="emboss" transform="translate(788 862) rotate(90)">SCREWPULL</text>
                <path d="M405 1620Q440 1580 645 1575M600 1694Q770 1695 835 1645" fill="none" stroke="#9d9fa0" stroke-width="11" />

                <!-- base -->
                <path d="M57 2275L105 2145L590 2020L1145 2090L1185 2220V2275L540 2457L57 2330z" fill="#59626b" opacity=".72" />
                <path d="M57 2275L105 2150L550 2280L550 2385z" fill="#757f89" opacity=".7" />
                <path d="M550 2280L1140 2095L1185 2220L550 2395z" fill="#4b545b" opacity=".8" />
                <path d="M57 2275L550 2395L1185 2220V2275L540 2457L57 2330z" fill="#495158" />
                <path d="M57 2275L520 2388V2455L57 2330z" fill="#646e77" />

                <!-- banner -->
                <path d="M595 1936L1152 1774V1945Q1100 2010 1040 2070Q920 2125 800 2165Q660 2150 595 2080z" fill="#000" />
                <path d="M597 1970L1152 1807" stroke="#e2e2e0" stroke-width="9" stroke-dasharray="230 6 34 6 400" />
                <text class="brand" transform="translate(648 2086) rotate(-17)">Screwpull</text>

                <g class="pale">
                    <path d="M610 1500Q640 1750 560 1880Q480 2010 400 2060Q350 2050 360 1980M620 1500Q640 1760 580 1880Q500 2020 430 2060M630 1720Q660 1900 700 1990Q760 2160 820 2170Q885 2160 887 2060L880 1800M645 1700Q670 1880 720 1990Q770 2130 830 2150" />
                    <path d="M405 1920L510 1950L570 1970Q590 2080 605 2190M410 1900L490 1945M400 2130Q420 2190 600 2200Q800 2190 880 2110M215 1960Q220 1950 240 1955L460 2010V2220M345 1950Q330 1920 370 1920L400 1930M202 2165L220 1960M232 2170L245 1970M440 2010V2200" />
                    <path d="M55 2145L545 2270Q560 2275 580 2268L1187 2090M57 2145L600 1985M720 1990L1187 2085M57 2275L550 2390L1187 2215M105 2150L550 2280L1140 2095M130 2140L550 2262L1120 2090M57 2145V2275M1187 2090V2215M75 2150V2330M520 2270V2450M550 2280V2440M585 2270V2450M1168 2100V2230M105 2150L600 2010L720 1985L1140 2095M400 2110Q405 2190 560 2200" />
                    <path d="M240 2295Q330 2290 380 2345" opacity=".3" />
                </g>
                <g class="ink">
                    <path d="M57 2275V2330L540 2457L1185 2275V2220M57 2330Q60 2336 70 2334L540 2447L1185 2265M90 2270L105 2150Q110 2140 125 2140M105 2325L115 2160M1150 2215L1140 2095M1135 2270L1120 2100M90 2270L540 2385L1185 2200" />
                    <path d="M110 2330L680 2160L1130 2275M90 2270L500 2150M860 2160L1185 2220M105 2325L540 2437L1135 2270" opacity=".6" />
                    <path d="M655 2360V2285L665 2280V2362M850 2300V2226L860 2222V2303M1045 2245V2170L1055 2165V2247M187 2235V2170L197 2166V2236" />
                    <path d="M200 2170L215 1960L350 1985M270 1965L275 2170M215 2165L260 2175M260 2205V1990L380 2020V2180M280 1990L400 1955L570 1990L590 2190M320 2130L350 1950H400L370 2080L355 2150L320 2140M430 2080V2240M460 2010L540 1990V2210L460 2240M275 1990L460 2050L600 2010M360 2070L520 2030M380 2180V2105M450 1980V2060L540 2020M200 2170L410 2240L540 2210M560 1970V2190L600 2200M480 2000V2230M415 2060L420 2240L435 2245M600 1900L470 2030M530 1960L440 2060" />
                </g>
                <path d="M405 2120Q420 2080 640 2080Q800 2082 850 2130M640 2100H672M655 2085V2150M700 2105H750M725 2080V2150" fill="none" stroke="#b5b5b3" stroke-width="3" />

                <!-- interference volume -->
                <g class="clash">
                    <path d="M401 1787L408 1510Q440 1462 645 1458L642 1600Q640 1680 628 1722Q440 1730 402 1780" />
                    <path d="M600 1580L645 1579Q800 1575 838 1535L848 1795Q840 1835 620 1843Q600 1780 600 1580M838 1510V1560" />
                    <path d="M407 1510L401 1787M839 1510L843 1790" stroke-width="12" />
                    <path d="M378 1556H438" stroke-width="4" />
                </g>
            </svg>

            <section class="dialog" aria-labelledby="dialog-title">
                <div class="dialog-title">
                    <h2 id="dialog-title">Globale Durchdringung</h2>
                    <button aria-label="Schließen"><svg width="8" height="8" viewBox="0 0 8 8"><path d="M1 0l3 3 3-3 1 1-2.500 3L8 7 7 8 4 5 1 8 0 7l2.500-3L0 1z" fill="#555" stroke="#555" /></svg></button>
                </div>
                <div class="dialog-tabs">
                    <button class="active">Analyse</button>
                    <button>KE</button>
                </div>
                <div class="sheet">
                    <div class="field">
                        <span class="name">Setup</span>
                        <label><input type="radio" bind:group={scope} value="parts" />Nur Teile</label>
                        <label><input type="radio" bind:group={scope} value="sub" />Nur Unterbaugruppe</label>
                    </div>
                    <div class="field indent"><label><input type="checkbox" />Sammelflächen einschließen</label></div>
                    <div class="field indent"><label><input type="checkbox" />Facetten einschließen</label></div>
                    <div class="field compute">
                        <span class="name">Berechnen</span>
                        <label><input type="radio" bind:group={accuracy} value="exact" />Exakt</label>
                        <label><input type="radio" bind:group={accuracy} value="fast" />Schnell</label>
                    </div>
                    <div class="result">
                        <div class="table-box">
                            <table>
                                <thead>
                                    <tr><th class="no">#</th><th class="first">Teil 1</th><th class="second">Teil 2</th><th class="volume">Volumen</th><th class="thin"></th><th></th></tr>
                                </thead>
                                <tbody>
                                    {#each results as row, i}
                                        <tr class:selected={selected === i} on:click={() => (selected = i)}>
                                            <td class="no">{row[0]}</td><td>{row[1]}</td><td>{row[2]}</td><td colspan="3">{row[3]}</td>
                                        </tr>
                                    {/each}
                                </tbody>
                            </table>
                        </div>
                        <button class="info" aria-label="Info"><svg width="13" height="20" viewBox="0 0 13 20">{@html icons.info}</svg></button>
                    </div>
                    <div class="actions">
                        <button>Alle anzeigen</button>
                        <button disabled>Löschen</button>
                        <button disabled>Verifizieren</button>
                    </div>
                    <div class="naming">
                        <div class="picker">
                            <select aria-label="Analysetyp"><option>Schnell</option><option>Gespeichert</option><option>KE</option></select>
                            <i class="caret"></i>
                        </div>
                        <input type="text" aria-label="Name" bind:value={featureName} />
                    </div>
                </div>
                <div class="buttons">
                    <button class="preview" aria-label="Vorschau"><svg width="20" height="16" viewBox="0 0 20 16">{@html icons.glasses}</svg></button>
                    <button aria-label="Wiederholen"><svg width="18" height="16" viewBox="0 0 18 16">{@html icons.repeat}</svg></button>
                    <button aria-label="OK"><svg width="18" height="16" viewBox="0 0 18 16">{@html icons.ok}</svg></button>
                    <button aria-label="Abbrechen"><svg width="18" height="16" viewBox="0 0 18 16">{@html icons.cancel}</svg></button>
                </div>
            </section>
        </div>
    </main>

    <footer>
        <button class="toggle" aria-label="Baum umschalten">{@render icon("tree")}</button>
        <button class="toggle" aria-label="Browser umschalten">{@render icon("globe")}</button>
        <i class="vline"></i>
        <p><i class="dot"></i>Paar 1 von 3: Teile STAND_1_0 und LANTERN_1_0 (142.637 MM^3).</p>
        <div class="view-tools">
            <i class="vline"></i>
            <button aria-label="Einpassen">{@render icon("zoomfit")}</button>
            <button aria-label="Vergrößern">{@render icon("zoomin")}</button>
            <button aria-label="Verkleinern">{@render icon("zoomout")}</button>
            <button aria-label="Bildaufbau">{@render icon("repaint")}</button>
            <button class="split" aria-label="Darstellungsstil">{@render icon("shade")}<i class="caret"></i></button>
            <button class="split" aria-label="Gespeicherte Orientierungen">
                <svg class="icon" viewBox="0 0 16 16"><path d="M.5 6.500l2-2h8v8l-2 2h-8z" fill="#eefcfc" stroke="#5aa" /><path d="M5 0h11v8H5z" fill="#eef0f1" /><text x="5" y="7" font-size="7" font-weight="bold" fill="#333">AB</text></svg>
                <i class="caret"></i>
            </button>
            <button aria-label="Ansichtsmanager">{@render icon("camera")}</button>
            <button class="split" aria-label="Bezugsanzeige">{@render icon("axes")}<i class="caret"></i></button>
            <button aria-label="Anmerkungsanzeige">{@render icon("annot")}</button>
            <button aria-label="Drehzentrum">{@render icon("csys")}</button>
        </div>
        <div class="find-tools">
            <i class="vline"></i>
            <svg width="28" height="12" viewBox="0 0 28 12"><circle cx="6" cy="6" r="5" fill="#b9bbbc" /><circle cx="16" cy="6" r="3" fill="#dcdddf" /><circle cx="23" cy="6" r="3" fill="#dcdddf" /></svg>
            <i class="vline"></i>
            <button class="boxed" aria-label="Suchen">{@render icon("binoc")}</button>
            <i class="vline"></i>
            <button class="boxed" aria-label="Auswahl">{@render icon("box")}</button>
        </div>
        <div class="picker filter">
            <select aria-label="Auswahlfilter"><option>Alle</option></select>
            <i class="caret"></i>
        </div>
    </footer>

    <svg class="orb" width="60" height="16" viewBox="0 0 60 16" aria-hidden="true">
        <defs>
            <radialGradient id="red"><stop offset="0" stop-color="#f0603a" stop-opacity=".9" /><stop offset="1" stop-color="#f0603a" stop-opacity="0" /></radialGradient>
            <radialGradient id="green"><stop offset="0" stop-color="#58b060" stop-opacity=".9" /><stop offset="1" stop-color="#58b060" stop-opacity="0" /></radialGradient>
        </defs>
        <ellipse cx="22" cy="14" rx="14" ry="9" fill="url(#red)" />
        <ellipse cx="42" cy="15" rx="14" ry="7" fill="url(#green)" />
        <circle cx="29" cy="30" r="22" fill="none" stroke="#2a4a68" stroke-width="1.500" />
    </svg>
    <div class="start" role="tooltip">Start</div>
</div>

<style>
    :global(body) {
        background: #fcfcfe;
    }
    .window {
        position: relative;
        display: flex;
        flex-direction: column;
        min-height: 100vh;
        box-sizing: border-box;
        border: 4px solid #c9ced1;
        outline: 1px solid #b2b5b7;
        outline-offset: -1px;
        font-family: "Liberation Sans", Arial, sans-serif;
        font-size: 13px;
        color: #3c3c44;
        background: #fcfcfe;
        overflow: hidden;
    }
    button,
    input,
    select {
        font: inherit;
        color: inherit;
    }
    button {
        padding: 0;
        border: none;
        background: none;
    }
    h1,
    h2,
    p,
    ul {
        margin: 0;
        padding: 0;
    }
    .icon {
        width: 16px;
        height: 16px;
        flex: none;
    }
    svg {
        display: block;
    }
    .caret {
        display: inline-block;
        flex: none;
        border: 3px solid transparent;
        border-top: 4px solid #333;
        border-bottom: none;
    }
    .caret.dim,
    :disabled .caret {
        border-top-color: #9b9b9b;
    }

    .titlebar {
        display: flex;
        align-items: center;
        box-sizing: border-box;
        height: 33px;
        padding-bottom: 2px;
    }
    .quick {
        display: flex;
        align-items: center;
        gap: 8px;
        padding-left: 12px;
    }
    .quick .sep {
        width: 1px;
        height: 24px;
        margin: 0 -3px;
        background: #c5c7c9;
    }
    .split {
        display: flex;
        align-items: center;
        gap: 8px;
    }
    .customize {
        display: flex;
        flex-direction: column;
        align-items: center;
        gap: 2px;
        margin-left: 4px;
    }
    .customize .bar {
        width: 8px;
        height: 1px;
        background: #333;
    }
    h1 {
        flex: 1;
        text-align: center;
        font-size: 15px;
        color: #b7b7b9;
    }
    .controls {
        display: flex;
        gap: 15px;
        padding-right: 10px;
    }
    .controls svg {
        width: 12px;
        height: 12px;
        fill: none;
        stroke: #b5b5b7;
    }

    .tabs {
        display: flex;
        align-items: flex-end;
        height: 28px;
        padding-left: 4px;
    }
    .tab {
        height: 24px;
        padding: 0 10px 2px;
        box-sizing: border-box;
        border-top: 1px solid #c9cbcd;
        border-right: 1px solid #dcdee0;
        background: #edeff1;
        font-size: 15px;
        font-weight: bold;
        color: #77777f;
        white-space: nowrap;
    }
    .tab.file {
        display: flex;
        align-items: center;
        gap: 4px;
        margin-right: 8px;
        padding: 0 7px 2px;
        border: 1px solid #c9cbcd;
        border-bottom: none;
    }
    .tab.file + .tab {
        border-left: 1px solid #c9cbcd;
    }
    .tab.active {
        z-index: 1;
        height: 29px;
        margin-bottom: -1px;
        border: 1px solid #c9cbcd;
        border-bottom: none;
        border-radius: 2px 2px 0 0;
        background: #fcfcfe;
        color: #333;
    }
    .tab:nth-last-child(2) {
        border-right-color: #c9cbcd;
    }
    .help {
        display: flex;
        align-items: center;
        gap: 7px;
        margin-left: auto;
        padding: 0 8px 8px 0;
    }

    .ribbon {
        display: flex;
        margin: 0 4px;
        border: 1px solid #c9cbcd;
    }
    .group {
        display: flex;
        flex-direction: column;
        box-sizing: border-box;
        border-right: 1px solid #d5d7d9;
    }
    .manage { width: 167px; }
    .custom { width: 317px; }
    .report { width: 175px; }
    .measure { width: 65px; }
    .geometry { width: 306px; }
    .study { width: 592px; }
    .tools {
        display: flex;
        gap: 7px;
        box-sizing: border-box;
        height: 82px;
        padding: 1px 0 0 7px;
    }
    .col {
        display: flex;
        flex-direction: column;
        align-items: flex-start;
    }
    .cmd {
        display: flex;
        align-items: center;
        gap: 4px;
        height: 26px;
        white-space: nowrap;
    }
    .cmd .caret {
        margin-left: 5px;
    }
    .cmd:disabled,
    .big:disabled {
        color: #9d9da1;
    }
    .cmd.on {
        height: 24px;
        margin: 1px 0 0 -4px;
        box-sizing: border-box;
        padding: 0 2px 0 3px;
        border: 1px solid #a8a9ac;
        border-top: 2px solid #8e8f93;
        background: linear-gradient(#cbcbce, #b2b2b6);
        color: #222;
    }
    .cmd.on .caret {
        margin-left: 2px;
    }
    .geometry .tools {
        gap: 4px;
    }
    .big {
        display: flex;
        flex-direction: column;
        align-items: center;
        padding-top: 5px;
        line-height: 16px;
        white-space: nowrap;
    }
    .big svg {
        width: 32px;
        height: 32px;
        margin-bottom: 6px;
    }
    .big .caret {
        margin-top: 5px;
    }
    .measure .tools {
        padding-left: 6px;
    }
    .divider {
        width: 1px;
        height: 62px;
        margin: 18px 1px 0 6px;
        background: #dcdee0;
    }
    .caption {
        display: flex;
        align-items: center;
        justify-content: center;
        gap: 6px;
        height: 24px;
        border-top: 1px solid #c9cbcd;
        background: #edeff1;
        color: #505058;
    }

    main {
        display: flex;
        flex: 1;
    }
    aside {
        display: flex;
        flex-direction: column;
        width: 208px;
        margin: 14px 4px 10px 4px;
    }
    .side-tabs {
        display: flex;
        margin-bottom: -1px;
    }
    .side-tabs button {
        display: flex;
        align-items: center;
        justify-content: center;
        width: 30px;
        height: 30px;
        box-sizing: border-box;
        border: 1px solid #c9cbcd;
        border-left: none;
        background: #edeff1;
    }
    .side-tabs .active {
        z-index: 1;
        border-left: 1px solid #c9cbcd;
        border-bottom: none;
        background: #fcfcfe;
    }
    .panel {
        display: flex;
        flex-direction: column;
        flex: 1;
        border: 1px solid #c9cbcd;
        border-right: 3px solid #c6cacd;
        border-bottom-width: 2px;
    }
    .panel-head {
        display: flex;
        align-items: center;
        height: 28px;
        padding-left: 20px;
    }
    .panel-head h2 {
        width: 106px;
        font-size: 13px;
        color: #44444c;
    }
    .panel-head button {
        display: flex;
        align-items: center;
        gap: 8px;
        width: 43px;
    }
    .search {
        display: flex;
        align-items: center;
        gap: 9px;
        height: 34px;
        border-bottom: 1px solid #c9cbcd;
    }
    .search label {
        display: flex;
        align-items: center;
        width: 106px;
        height: 28px;
        margin-bottom: 4px;
        border: 1px solid #c9cbcd;
    }
    .search input {
        width: 80px;
        margin-left: 6px;
        box-sizing: border-box;
        border: none;
        background: none;
    }
    aside ul {
        flex: 1;
        list-style: none;
        overflow: hidden;
    }
    li {
        display: flex;
        align-items: center;
        gap: 4px;
        height: 18px;
        padding-left: 4px;
        font-weight: bold;
        color: #4e4e54;
        white-space: nowrap;
    }
    li.d1 { padding-left: 9px; }
    li.d2 { padding-left: 29px; }
    li.off {
        font-weight: normal;
        color: #b9b9bb;
    }
    .twist {
        width: 10px;
    }
    .twist button {
        display: block;
        border: 4px solid transparent;
    }
    .twist .closed {
        border-left: 7px solid #7d7d7d;
        border-right: none;
    }
    .twist .opened {
        border-top: 7px solid #7d7d7d;
        border-bottom: none;
    }
    .mark {
        width: 4px;
        height: 5px;
        margin: 0 -3px 7px 0;
        background: #444;
    }
    .scroll {
        display: flex;
        height: 18px;
        margin: 0 1px 1px;
        border: 1px solid #c9cbcd;
    }
    .scroll button {
        display: flex;
        align-items: center;
        justify-content: center;
        width: 15px;
    }
    .left,
    .right {
        border: 4px solid transparent;
    }
    .left {
        border-right: 5px solid #444;
        border-left: none;
    }
    .right {
        border-left: 5px solid #444;
        border-right: none;
    }
    .track {
        flex: 1;
        padding-right: 6px;
        border: solid #c9cbcd;
        border-width: 0 1px;
        background: #eeeff1;
    }
    .thumb {
        display: flex;
        align-items: center;
        justify-content: center;
        gap: 2px;
        height: 16px;
        border: 1px solid #c9cbcd;
        background: linear-gradient(#fdfdfd, #e6e7e9);
    }
    .thumb i {
        width: 1px;
        height: 8px;
        background: #aaa;
    }

    .canvas {
        position: relative;
        flex: 1;
        min-height: 829px;
        background: #fff;
    }
    .style-state {
        position: absolute;
        left: 7px;
        top: 710px;
        color: #98989a;
    }
    .model {
        position: absolute;
        left: 310px;
        top: 6px;
        width: 420px;
        height: 830px;
    }
    .model .hood,
    .model .ink,
    .model .pale,
    .model .soft,
    .model .clash {
        fill: none;
        stroke-width: 3;
        stroke-linejoin: round;
    }
    .model .hood {
        stroke: #6e7174;
        stroke-width: 4;
    }
    .model .ink { stroke: #101214; }
    .model .soft { stroke: #30373c; }
    .model .pale {
        stroke: #a9a6a4;
        stroke-width: 4;
    }
    .model .clash {
        stroke: #f00;
        stroke-width: 9;
    }
    .engraved,
    .brand {
        font-family: "Liberation Serif", serif;
        font-style: italic;
    }
    .engraved {
        font-size: 88px;
        fill: #596269;
        stroke: #23282b;
        stroke-width: 4;
    }
    .brand {
        font-size: 124px;
        fill: #ececea;
    }
    .emboss {
        font-size: 74px;
        fill: none;
        stroke: #0a0a0a;
        stroke-width: 5;
        stroke-dasharray: 14 3;
    }

    .dialog {
        position: absolute;
        left: 782px;
        top: 214px;
        width: 452px;
        padding: 3px;
        border: 1px solid #8e9092;
        background: #c6cacd;
    }
    .dialog-title {
        display: flex;
        align-items: center;
        height: 20px;
        padding-right: 7px;
        border-bottom: 1px solid #c2c4c6;
        background: linear-gradient(#fbfbfc, #e3e5e7);
    }
    .dialog-title h2 {
        flex: 1;
        padding-right: 4px;
        text-align: center;
        font-size: 13px;
        color: #55555c;
    }
    .dialog-tabs {
        display: flex;
        align-items: flex-end;
        height: 26px;
        padding-left: 2px;
        background: #edeff1;
    }
    .dialog-tabs button {
        height: 22px;
        padding: 0 5px;
        box-sizing: border-box;
        border: 1px solid #c9cbcd;
        border-left: none;
        border-bottom: none;
        font-weight: bold;
        color: #808086;
    }
    .dialog-tabs .active {
        z-index: 1;
        height: 25px;
        margin-bottom: -1px;
        border-left: 1px solid #c9cbcd;
        border-radius: 2px 2px 0 0;
        background: #fcfcfe;
        color: #222;
    }
    .sheet {
        margin: 0 2px;
        padding: 2px 6px 4px 7px;
        border: 1px solid #c9cbcd;
        background: #fcfcfe;
        box-shadow: -2px 0 #edeff1, 2px 0 #edeff1;
    }
    .field {
        display: flex;
        align-items: center;
        gap: 10px;
        height: 22px;
    }
    .field .name {
        width: 31px;
    }
    .field.indent {
        padding-left: 41px;
    }
    .field.compute {
        height: 30px;
        padding-bottom: 1px;
    }
    .compute .name {
        width: 83px;
    }
    .field label {
        display: flex;
        align-items: center;
        gap: 7px;
    }
    .field input {
        appearance: none;
        width: 13px;
        height: 13px;
        margin: 0;
        border: 1px solid #85878a;
        background: #fff;
    }
    .field input[type="radio"] {
        border-radius: 50%;
    }
    .field input[type="radio"]:checked {
        background: radial-gradient(circle, #333 0 3px, #fff 4px);
    }
    .result {
        display: flex;
        align-items: flex-end;
        gap: 9px;
    }
    .table-box {
        flex: 0 1 402px;
        height: 116px;
        padding: 0 1px;
        box-sizing: border-box;
        border: 1px solid #a5a7a9;
        background: #fff;
    }
    table {
        width: 100%;
        table-layout: fixed;
        border-collapse: collapse;
    }
    th {
        height: 23px;
        padding: 3px 0 0;
        box-sizing: border-box;
        border-right: 1px solid #dadcde;
        border-bottom: 1px solid #c9cbcd;
        background: linear-gradient(#fff, #ebedef);
        color: #66666c;
    }
    .no { width: 28px; }
    .first { width: 77px; }
    .second { width: 80px; }
    .volume { width: 77px; }
    .thin { width: 9px; }
    .first,
    .second {
        padding-right: 24px;
    }
    td {
        height: 18px;
        padding: 0 0 0 1px;
        white-space: nowrap;
    }
    td.no {
        padding-left: 3px;
    }
    tr.selected {
        background: #b0e2ff;
    }
    .info {
        margin-bottom: 5px;
    }
    .actions {
        display: flex;
        gap: 21px;
        padding: 2px 5px 6px;
    }
    .actions button {
        width: 108px;
        height: 24px;
        box-sizing: border-box;
        border: 1px solid #b5b7b9;
        border-radius: 3px;
        background: linear-gradient(#fdfdfe, #eeeff1);
        font-weight: bold;
    }
    .actions button:disabled {
        border-color: #d5d7d9;
        color: #a2a2a6;
    }
    .naming {
        display: flex;
        gap: 4px;
    }
    .picker {
        position: relative;
        width: 98px;
        height: 23px;
    }
    .picker select {
        appearance: none;
        width: 100%;
        height: 100%;
        padding: 0 5px;
        box-sizing: border-box;
        border: 1px solid #bfc1c3;
        border-radius: 0;
        background: linear-gradient(90deg, transparent calc(100% - 15px), #c9cbcd calc(100% - 15px), #c9cbcd calc(100% - 14px), #f2f3f5 calc(100% - 14px)), #fcfcfe;
    }
    .picker .caret {
        position: absolute;
        right: 4px;
        top: 10px;
        pointer-events: none;
    }
    .naming input {
        flex: 1;
        min-width: 0;
        height: 24px;
        padding: 0 3px;
        box-sizing: border-box;
        border: 1px solid #cfd1d3;
        background: #fff;
        color: #9d9da1;
    }
    .buttons {
        display: flex;
        gap: 4px;
        padding: 4px;
        background: #edeff1;
    }
    .buttons button {
        display: flex;
        align-items: center;
        justify-content: center;
        flex: 1;
        height: 28px;
        box-sizing: border-box;
        border: 1px solid #bcbec0;
        border-radius: 3px;
        background: linear-gradient(#fdfdfe, #eeeff1);
    }
    .buttons .preview {
        border-color: #8fc4e8;
        background: linear-gradient(#b9e0fb, #8accf8);
    }

    footer {
        display: flex;
        align-items: center;
        height: 36px;
        padding: 0 18px 0 6px;
        border-top: 2px solid #999b9d;
        background: #edeff1;
    }
    .toggle {
        display: flex;
        align-items: center;
        justify-content: center;
        width: 21px;
        height: 21px;
        margin: 6px 5px 0 0;
        box-sizing: border-box;
        border: 1px solid #c9cbcd;
    }
    .vline {
        width: 1px;
        height: 30px;
        background: #d0d2d4;
    }
    footer > .vline {
        height: 22px;
        margin-left: 6px;
    }
    footer p {
        display: flex;
        align-items: center;
        gap: 6px;
        padding: 0 0 6px 7px;
        font-size: 12px;
        font-weight: bold;
        color: #4c4c52;
        white-space: nowrap;
    }
    .dot {
        width: 5px;
        height: 5px;
        border-radius: 50%;
        background: #00f;
    }
    .view-tools {
        display: flex;
        align-items: center;
        gap: 8px;
        margin-left: auto;
    }
    .view-tools button {
        margin-bottom: 3px;
    }
    .find-tools {
        display: flex;
        align-items: center;
        gap: 4px;
        margin: 0 95px 0 30px;
    }
    .boxed {
        display: flex;
        align-items: center;
        justify-content: center;
        width: 40px;
        height: 28px;
        box-sizing: border-box;
        border: 1px solid #d2d4d6;
        border-radius: 3px;
    }
    .picker.filter {
        width: 178px;
    }
    .start {
        position: absolute;
        left: -3px;
        bottom: 16px;
        padding: 0 5px;
        border: 1px solid #777;
        border-radius: 3px;
        background: linear-gradient(#fff, #e8e9f2);
        box-shadow: 2px 2px 2px #9999;
        font-family: "Open Sans", "Noto Sans", sans-serif;
        font-size: 14px;
        line-height: 23px;
        color: #555;
    }
    .orb {
        position: absolute;
        left: 0;
        bottom: -4px;
    }
</style>
